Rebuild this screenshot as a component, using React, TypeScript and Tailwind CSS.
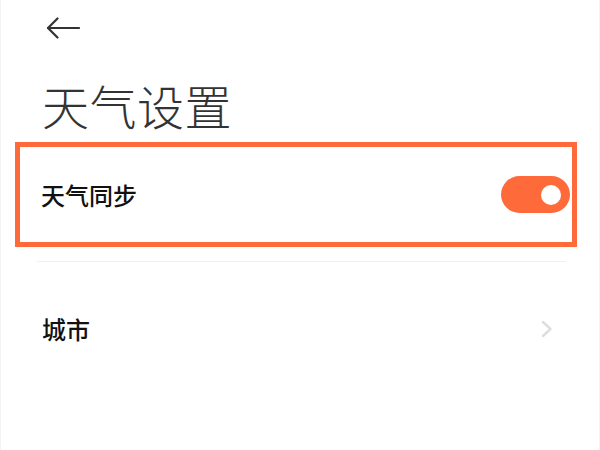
import { useState } from 'react';

export default function App() {
  const [sync, setSync] = useState(true);

  return (
    <div
      className="w-[600px] h-[450px] bg-white border-x border-[#f3f3f3] overflow-hidden"
      style={{ fontFamily: '"Noto Sans CJK SC", "Noto Sans", sans-serif' }}
    >
      {/* back */}
      <div className="pt-[17px] pl-[45px] h-[40px]">
        <svg width="34" height="22" viewBox="0 0 34 22" fill="none" stroke="#333" strokeWidth="2.2" strokeLinecap="round" strokeLinejoin="round">
          <path d="M2 11h31" />
          <path d="M11.5 1.5 2 11l9.5 9.5" />
        </svg>
      </div>

      <h1 className="mt-[41px] pl-[41px] text-[47px] leading-[48px] font-light text-[#333] tracking-[0.5px]">
        天气设置
      </h1>

      {/* highlighted row */}
      <div className="mt-[13px] mx-[14px] w-[562px] h-[105px] border-[5px] border-[#ff6a3a] flex items-center justify-between pl-[21px] pr-[2px]">
        <span className="text-[24px] font-medium text-[#111]">天气同步</span>
        <button
          onClick={() => setSync(!sync)}
          className={`w-[69px] h-[37px] rounded-full flex items-center px-[9px] ${sync ? 'bg-[#ff6a3a] justify-end' : 'bg-[#e5e5e5] justify-start'}`}
        >
          <span className="w-[20px] h-[20px] rounded-full bg-white block" />
        </button>
      </div>

      <div className="mt-[14px] ml-[36px] w-[529px] h-px bg-[#f0f0f0]" />

      {/* city row */}
      <div className="h-[135px] flex items-center justify-between pl-[41px] pr-[46px] -mt-[1px]">
        <span className="text-[24px] font-medium text-[#111]">城市</span>
        <svg width="12" height="18" viewBox="0 0 12 18" fill="none" stroke="#dedede" strokeWidth="2.4" strokeLinecap="round" strokeLinejoin="round">
          <path d="M2 2l7.5 7L2 16" />
        </svg>
      </div>
    </div>
  );
}
